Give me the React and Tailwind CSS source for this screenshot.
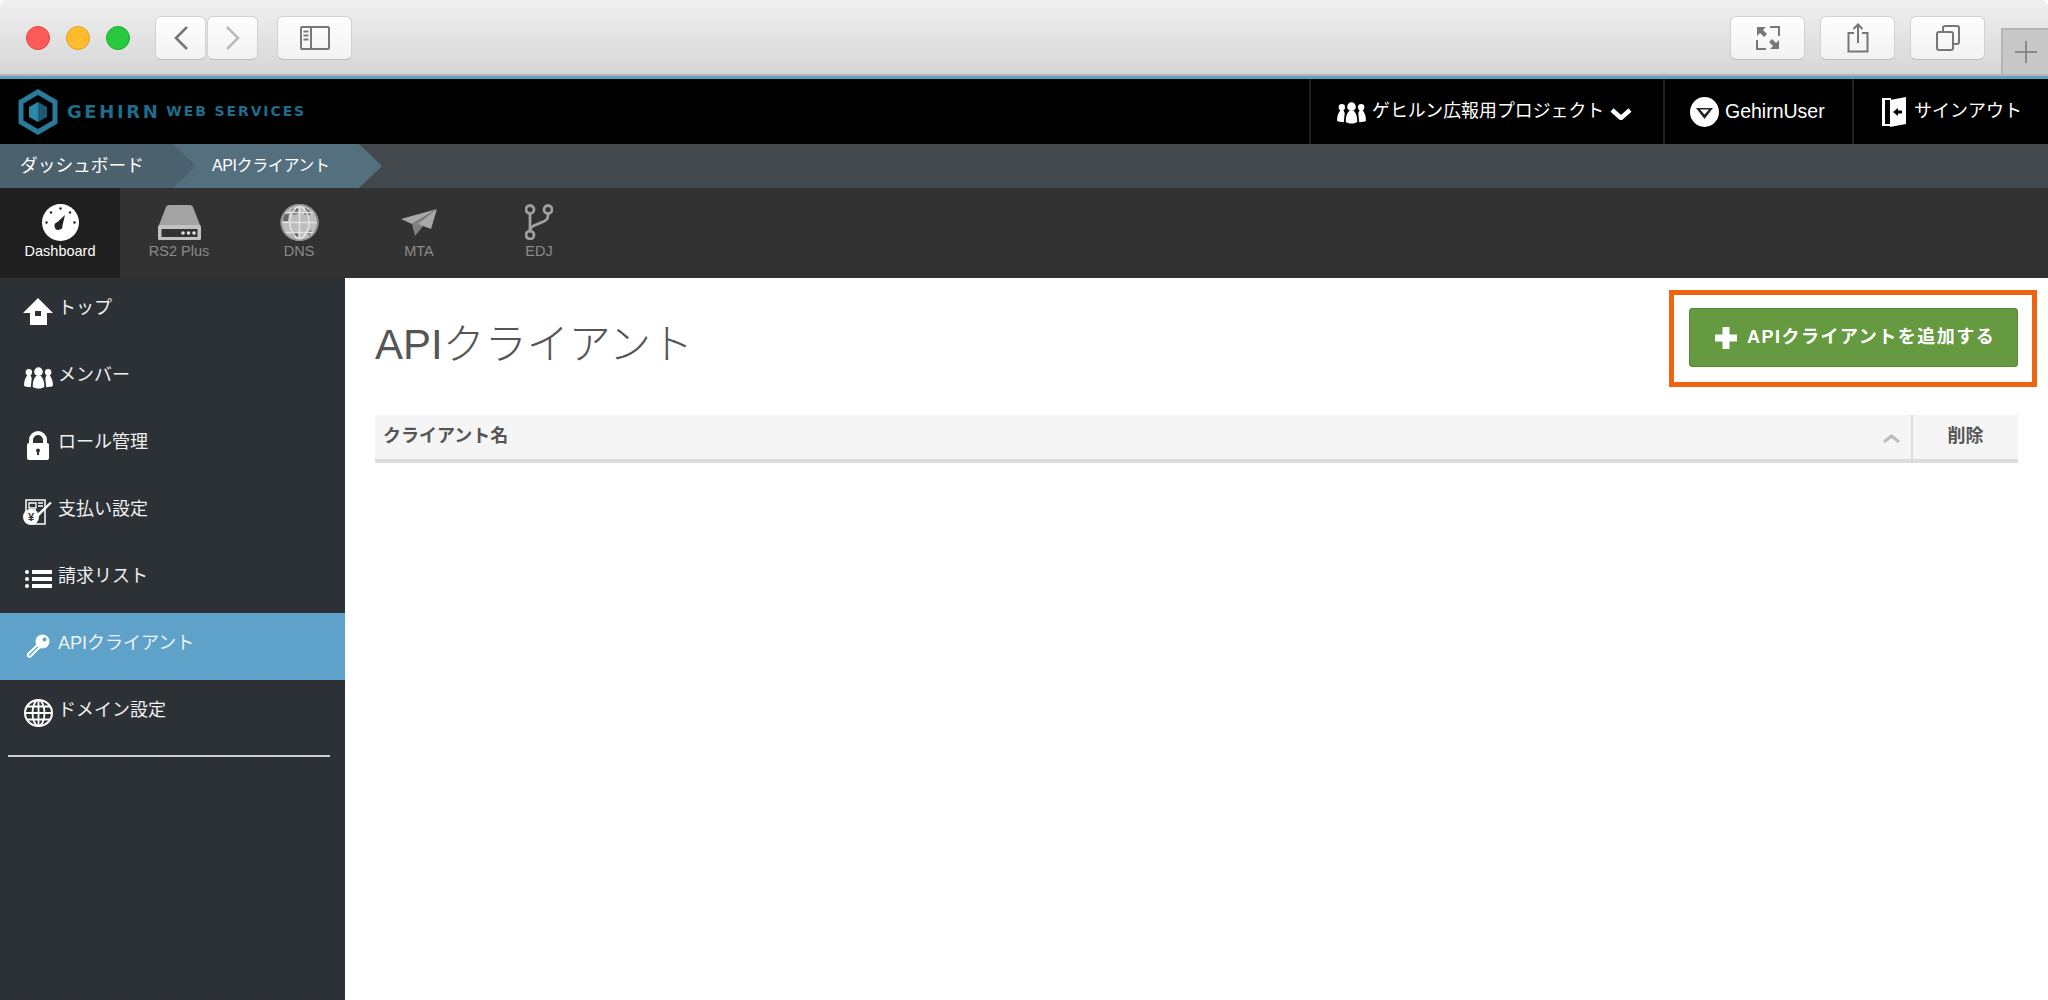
import React from 'react';

const FONT = "font-['Liberation_Sans','Noto_Sans_CJK_JP',sans-serif]";

function ChromeButton({ className = '', children }) {
  return (
    <div className={`h-[44px] flex items-center justify-center rounded-[6px] border border-[#d2d2d2] border-b-[#bdbdbd] bg-gradient-to-b from-[#fefefe] to-[#f2f2f2] ${className}`}>
      {children}
    </div>
  );
}

function TitleBar() {
  return (
    <div className="relative h-[76px] shrink-0 flex items-start pt-[16px] pl-[26px] pr-[63px] rounded-t-[6px] bg-gradient-to-b from-[#f0f0f0] to-[#d6d6d6] border-b-[2px] border-[#b5b5b5]">
      <div className="flex gap-[16px] mt-[10px]">
        <div className="w-[24px] h-[24px] rounded-full bg-[#fc5b57] border border-[#e0443e]" />
        <div className="w-[24px] h-[24px] rounded-full bg-[#fdbc2e] border border-[#dea123]" />
        <div className="w-[24px] h-[24px] rounded-full bg-[#28c83f] border border-[#1dad2b]" />
      </div>
      <div className="flex gap-[1px] ml-[25px]">
        <ChromeButton className="w-[51px]">
          <svg width="18" height="26" viewBox="0 0 18 26" fill="none" stroke="#777" strokeWidth="2.6"><path d="M15 2 4 13l11 11" /></svg>
        </ChromeButton>
        <ChromeButton className="w-[51px]">
          <svg width="18" height="26" viewBox="0 0 18 26" fill="none" stroke="#bcbcbc" strokeWidth="2.6"><path d="M3 2l11 11L3 24" /></svg>
        </ChromeButton>
      </div>
      <ChromeButton className="w-[75px] ml-[19px]">
        <svg width="30" height="24" viewBox="0 0 30 24" fill="none" stroke="#777" strokeWidth="2"><rect x="1" y="1" width="28" height="22" rx="1" /><path d="M11 1v22M3.500 5.500h5M3.500 9.500h5M3.500 13.500h5" /></svg>
      </ChromeButton>
      <div className="ml-auto flex gap-[15px]">
        <ChromeButton className="w-[75px]">
          <svg width="24" height="24" viewBox="0 0 24 24" fill="none">
            <path d="M14 1h9v9M1 14v9h9" stroke="#777" strokeWidth="2" />
            <path d="M1 1h9L7 4l4 4-3 3-4-4-3 3zM23 23h-9l3-3-4-4 3-3 4 4 3-3z" fill="#777" />
          </svg>
        </ChromeButton>
        <ChromeButton className="w-[75px]">
          <svg width="22" height="30" viewBox="0 0 22 30" fill="none" stroke="#777" strokeWidth="2"><path d="M7 10H1.500v18.500h19V10H15M11 20V2M6.500 6 11 1.500 15.500 6" /></svg>
        </ChromeButton>
        <ChromeButton className="w-[75px]">
          <svg width="24" height="26" viewBox="0 0 24 26" fill="none" stroke="#777" strokeWidth="2"><rect x="1" y="7" width="16" height="18" rx="2" /><path d="M7 6V3a2 2 0 0 1 2-2h12a2 2 0 0 1 2 2v14a2 2 0 0 1-2 2h-3" /></svg>
        </ChromeButton>
      </div>
      <div className="absolute right-0 bottom-0 w-[47px] h-[46px] flex items-center justify-center bg-[#c8c8c8] border-l-[2px] border-t-[2px] border-[#b5b5b5]">
        <svg width="22" height="22" viewBox="0 0 22 22" stroke="#777" strokeWidth="1.500"><path d="M11 0v22M0 11h22" /></svg>
      </div>
    </div>
  );
}

function UsersIcon({ className }) {
  return (
    <svg className={className} viewBox="0 0 30 22" fill="#fff">
      <circle cx="5" cy="5" r="3.300" /><circle cx="25" cy="5" r="3.300" />
      <path d="M3.500 8h3L8 11l-1 9.500c-3 0-5.500-.5-7-1.500 0-5 1.500-8 3.500-11zM26.500 8h-3L22 11l1 9.500c3 0 5.500-.5 7-1.500 0-5-1.500-8-3.500-11z" />
      <circle cx="15" cy="4.500" r="4.500" />
      <path d="M12.500 9h5c2.500 2.500 3.500 6.500 3.500 11-2 2.500-10 2.500-12 0 0-4.500 1-8.500 3.500-11z" />
    </svg>
  );
}

function TopHeader() {
  return (
    <div className="h-[65px] shrink-0 flex bg-black text-white border-t-[3px] border-[#5ba3ca] box-content">
      <div className="flex items-center pl-[18px]">
        <svg width="40" height="46" viewBox="0 0 40 46">
          <path d="M20 3 37 13v20L20 43 3 33V13z" fill="none" stroke="#2a7a9c" strokeWidth="5" />
          <path d="M20 13v20l-9-5V18z" fill="#2a87a8" />
          <path d="M20 13v20l9-5V18z" fill="#1d5a72" />
        </svg>
        <span className="ml-[9px] font-['DejaVu_Sans',sans-serif] font-bold text-[18px] tracking-[2.600px] text-[#1f6d8c]">GEHIRN</span>
        <span className="ml-[6px] font-['DejaVu_Sans',sans-serif] text-[14px] tracking-[1.900px] text-[#1f6d8c] font-bold whitespace-nowrap">WEB SERVICES</span>
      </div>
      <div className="ml-auto flex">
        <div className="w-[354px] flex items-center pl-[26px] border-l-[2px] border-[#222]">
          <UsersIcon className="w-[29px] h-[22px] mt-[3px]" />
          <span className="ml-[6px] text-[17.900px]">ゲヒルン広報用プロジェクト</span>
          <svg className="ml-[6px] mt-[4px]" width="22" height="12" viewBox="0 0 22 12" fill="none" stroke="#fff" strokeWidth="4.500"><path d="M2 2l9 8 9-8" /></svg>
        </div>
        <div className="w-[189px] flex items-center pl-[25px] border-l-[2px] border-[#222]">
          <svg width="29" height="30" viewBox="0 0 29 30">
            <ellipse cx="14.500" cy="15" rx="14.500" ry="15" fill="#fff" />
            <path d="M6 11h17l-8.500 11z" fill="#222" />
            <path d="M10 12.500h9l-4.500 5z" fill="#fff" />
          </svg>
          <span className="ml-[6px] text-[19.500px]">GehirnUser</span>
        </div>
        <div className="w-[196px] flex items-center pl-[28px] border-l-[2px] border-[#222]">
          <svg width="25" height="30" viewBox="0 0 25 30">
            <path d="M0 1h9v2H3v24h6v2H0z" fill="#fff" />
            <path d="M8 3 24 0v27L8 30z" fill="#fff" />
            <path d="M11 15l5-4v2.500h4v3h-4V19z" fill="#000" />
          </svg>
          <span className="ml-[7px] text-[18px]">サインアウト</span>
        </div>
      </div>
    </div>
  );
}

function Breadcrumb() {
  return (
    <div className="h-[44px] shrink-0 flex bg-[#42484c] text-white">
      <div className="relative z-10 w-[196px] pl-[20px] flex items-center bg-[#4b616d] text-[17.700px] [clip-path:polygon(0_0,173px_0,196px_50%,173px_100%,0_100%)]">
        ダッシュボード
      </div>
      <div className="-ml-[23px] w-[209px] pl-[39px] flex items-center bg-[#54707f] text-[16px] tracking-[-0.400px] [clip-path:polygon(0_0,186px_0,209px_50%,186px_100%,0_100%)]">
        APIクライアント
      </div>
    </div>
  );
}

const navTabs = [
  {
    label: 'Dashboard',
    active: true,
    icon: (
      <svg width="37" height="37" viewBox="0 0 37 37">
        <circle cx="18.500" cy="18.500" r="18.500" fill="#fff" />
        <path d="M23 11l-2.500 10.500a4 4 0 1 1-5-3.500z" fill="#222" />
        <g fill="#222"><circle cx="18.500" cy="4.500" r="1.200" /><circle cx="9" cy="8.500" r="1.200" /><circle cx="28" cy="8.500" r="1.200" /><circle cx="4.500" cy="18.500" r="1.200" /><circle cx="32.500" cy="18.500" r="1.200" /></g>
      </svg>
    ),
  },
  {
    label: 'RS2 Plus',
    icon: (
      <svg width="43" height="35" viewBox="0 0 43 35">
        <path d="M11 0h21c1.500 0 2.500 1 3 2l7 18H1L8 2c.5-1 1.500-2 3-2z" fill="#a3a3a3" />
        <rect x="0" y="20" width="43" height="15" rx="1.500" fill="#c2c2c2" />
        <rect x="3.500" y="24" width="36" height="8" fill="#333" />
        <g fill="#e0e0e0"><circle cx="25" cy="28" r="1.800" /><circle cx="30.500" cy="28" r="1.800" /><circle cx="36" cy="28" r="1.800" /></g>
      </svg>
    ),
  },
  {
    label: 'DNS',
    icon: (
      <svg width="39" height="37" viewBox="0 0 39 37" fill="none">
        <ellipse cx="19.500" cy="18.500" rx="19" ry="18.500" fill="#bdbdbd" />
        <path d="M12 5l6-1v6l-7 1zM25 4l6 4-2 4-5-2zM4 11l5-2-1 8H3zM11 28l7 1v4l-5-1zM27 28l5-2-3 6z" fill="#666" />
        <path d="M19.500 1v35M1 18.500h37M5 8.500h29M5 28.500h29M19.500 1c-13 9-13 26 0 35M19.500 1c13 9 13 26 0 35" stroke="#e2e2e2" strokeWidth="1.600" />
        <ellipse cx="19.500" cy="18.500" rx="18.200" ry="17.700" stroke="#8c8c8c" strokeWidth="1.600" />
      </svg>
    ),
  },
  {
    label: 'MTA',
    icon: (
      <svg width="36" height="27" viewBox="0 0 36 27">
        <path d="M36 0 0 10l11 5z" fill="#a8a8a8" />
        <path d="M36 0 11 15l3 12z" fill="#808080" />
        <path d="M36 0 17 15l13 5z" fill="#a8a8a8" />
      </svg>
    ),
  },
  {
    label: 'EDJ',
    icon: (
      <svg width="28" height="36" viewBox="0 0 28 36" fill="none" stroke="#a0a0a0" strokeWidth="2.800">
        <circle cx="5" cy="5.500" r="4" /><circle cx="23" cy="5.500" r="4" /><circle cx="5" cy="31" r="4" />
        <path d="M5 9.500v17.500M23 9.500v2c0 5-4 6-9 8-5 2-9 3-9 8" />
      </svg>
    ),
  },
];

function NavTabs() {
  return (
    <div className="h-[90px] shrink-0 flex bg-[#323232]">
      {navTabs.map((tab) => (
        <div key={tab.label} className={`w-[120px] flex flex-col items-center ${tab.active ? '-mr-px bg-[#1f1f1f] text-white' : 'text-[#8a8a8a]'}`}>
          <div className="h-[38px] mt-[15px] flex items-center justify-center">{tab.icon}</div>
          <span className="text-[14.500px] leading-[20px]">{tab.label}</span>
        </div>
      ))}
    </div>
  );
}

const menu = [
  {
    label: 'トップ',
    icon: (
      <svg width="30" height="27" viewBox="0 0 30 27" fill="#fff" fillRule="evenodd">
        <path d="M15 0l15 15h-6v12H7V15H0zM12 13v5h6v-5z" />
      </svg>
    ),
  },
  { label: 'メンバー', icon: <UsersIcon className="w-[29px] h-[22px]" /> },
  {
    label: 'ロール管理',
    icon: (
      <svg width="24" height="29" viewBox="0 0 24 29" fill="none">
        <path d="M5 13V9a7 7 0 0 1 14 0v4" stroke="#fff" strokeWidth="4" />
        <rect x="1" y="12" width="22" height="17" rx="2" fill="#fff" />
        <circle cx="12" cy="19.500" r="2" fill="#2d3136" />
        <rect x="11" y="20" width="2" height="4" fill="#2d3136" />
      </svg>
    ),
  },
  {
    label: '支払い設定',
    icon: (
      <svg width="30" height="26" viewBox="0 0 30 26" fill="none">
        <path d="M3 13V1h19v24H10" stroke="#fff" strokeWidth="1.500" />
        <path d="M6 4h7v5H6zM15 4h5M15 7h5M6 11h7" stroke="#fff" strokeWidth="1.300" />
        <path d="M13 16 27 3l2 1-14 14z" fill="#fff" />
        <circle cx="8" cy="18" r="8" fill="#fff" />
        <text x="8" y="22" textAnchor="middle" fontSize="11" fontWeight="700" fill="#2d3136" fontFamily="Liberation Sans">¥</text>
      </svg>
    ),
  },
  {
    label: '請求リスト',
    icon: (
      <svg width="27" height="20" viewBox="0 0 27 20" fill="#fff">
        <circle cx="2" cy="3" r="2" /><circle cx="2" cy="10" r="2" /><circle cx="2" cy="17" r="2" />
        <rect x="7" y="1" width="20" height="4" /><rect x="7" y="8" width="20" height="4" /><rect x="7" y="15" width="20" height="4" />
      </svg>
    ),
  },
  {
    label: 'APIクライアント',
    active: true,
    icon: (
      <svg width="24" height="25" viewBox="0 0 24 25" fill="none">
        <path d="M12 10.500 2 20c-1 1.500 1 3.500 2.500 2.500L14 13" stroke="#fff" strokeWidth="2" />
        <circle cx="16.500" cy="7.500" r="7" fill="#fff" />
        <circle cx="18.500" cy="5.500" r="2" fill="#5ea2c9" />
      </svg>
    ),
  },
  {
    label: 'ドメイン設定',
    icon: (
      <svg width="29" height="28" viewBox="0 0 29 28" fill="none" stroke="#fff" strokeWidth="1.800">
        <ellipse cx="14.500" cy="14" rx="13.500" ry="13" fill="#2d3136" strokeWidth="2" />
        <ellipse cx="14.500" cy="14" rx="6" ry="13" />
        <path d="M14.500 1v26M1 14h27M3 7.500h23M3 20.500h23" />
      </svg>
    ),
  },
];

function Sidebar() {
  return (
    <div className="w-[345px] shrink-0 bg-[#2d3136] bg-[radial-gradient(#1e3a40_0.5px,transparent_0.8px)] bg-size-[6px_6px]">
      {menu.map((item) => (
        <div key={item.label} className={`h-[67px] flex items-start pl-[23px] pt-[17px] text-[18px] leading-[26px] ${item.active ? 'bg-[#5ea2c9] text-[#eef3f6]' : 'text-[#f0f0f0]'}`}>
          <div className="w-[30px] h-[32px] flex items-center justify-center shrink-0">{item.icon}</div>
          <span className="ml-[5px]">{item.label}</span>
        </div>
      ))}
      <div className="mx-[8px] mt-[8px] h-[2px] w-[322px] bg-[#d0d0d0]" />
    </div>
  );
}

function Content() {
  return (
    <div className="flex-1 bg-white pl-[30px] pr-[30px]">
      <div className="flex items-start justify-between pt-[30px]">
        <h1 className="text-[42px] leading-[73px] -mb-[3px] font-light text-[#555]">APIクライアント</h1>
        <div className="relative">
          <button className="w-[329px] h-[59px] flex items-center pl-[25px] rounded-[3px] bg-[#669a41] border border-[#578637] text-white font-bold text-[18px] tracking-[1.500px]">
            <svg width="22" height="22" viewBox="0 0 22 22" fill="#fff"><path d="M7.500 0h7v7.500H22v7h-7.500V22h-7v-7.500H0v-7h7.500z" /></svg>
            <span className="ml-[10px]">APIクライアントを追加する</span>
          </button>
          <div className="absolute -left-[20px] -top-[18px] -right-[19px] -bottom-[20px] border-[5px] border-[#ee640f] pointer-events-none" />
        </div>
      </div>
      <div className="mt-[37px] h-[48px] flex bg-[#f5f5f5] border-b-[4px] border-[#dddddd] text-[#555] font-bold text-[18px]">
        <div className="flex-1 flex items-center pl-[8px] pb-[2px]">
          クライアント名
          <svg className="ml-auto mr-[11px] mt-[4px]" width="17" height="9" viewBox="0 0 17 9" fill="none" stroke="#bcbcbc" strokeWidth="3"><path d="M1 8l7.500-6L16 8" /></svg>
        </div>
        <div className="w-[107px] flex items-center justify-center pb-[2px] border-l-[2px] border-[#dddddd]">削除</div>
      </div>
    </div>
  );
}

export default function App() {
  return (
    <div className={`h-[1000px] w-[2048px] flex flex-col overflow-hidden bg-white ${FONT}`}>
      <TitleBar />
      <TopHeader />
      <Breadcrumb />
      <NavTabs />
      <div className="flex flex-1 min-h-0">
        <Sidebar />
        <Content />
      </div>
    </div>
  );
}
